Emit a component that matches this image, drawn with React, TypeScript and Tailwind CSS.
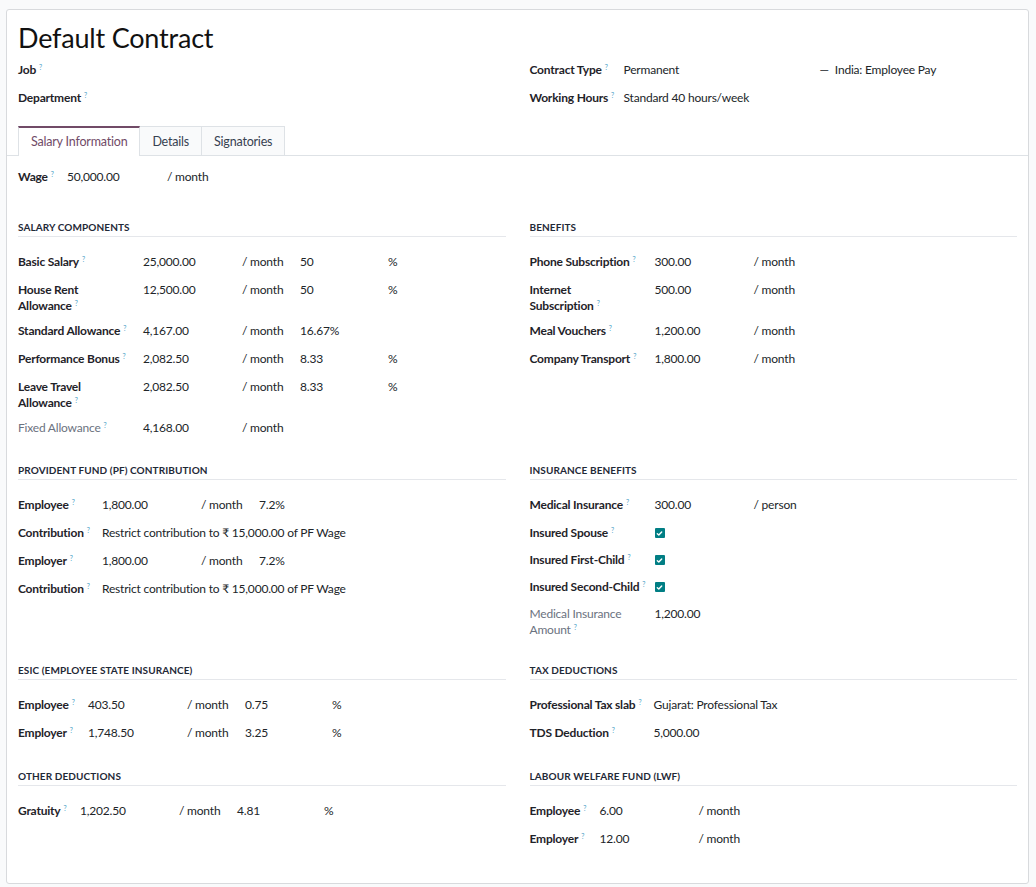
import React from "react";

type Row = {
  label: string[];
  muted?: boolean;
  cells: React.ReactNode[];
  h?: string;
};

type Section = {
  title: string;
  cols: string;
  rows: Row[];
};

function Help() {
  return <span className="ml-[3px] align-top text-[7px] leading-[10px] font-normal text-[#4fa3c7]">?</span>;
}

function Check() {
  return (
    <span className="mt-[3px] flex h-[10px] w-[10px] items-center justify-center rounded-[1px] bg-[#017e84]">
      <svg width="7" height="7" viewBox="0 0 8 8" fill="none" stroke="white" strokeWidth="1.6" strokeLinecap="round" strokeLinejoin="round">
        <path d="M1.5 4.2l1.7 1.6L6.5 2.2" />
      </svg>
    </span>
  );
}

function FieldRow({ row, cols }: { row: Row; cols: string }) {
  return (
    <div className={`grid ${cols} ${row.h ?? "h-[28px]"} items-start pt-[6px] leading-[16px]`}>
      <div className={`whitespace-nowrap ${row.muted ? "font-normal text-[#6b7280]" : "font-bold text-[#1f2329]"}`}>
        {row.label.map((l, i) => (
          <div key={i}>
            {l}
            {i === row.label.length - 1 && <Help />}
          </div>
        ))}
      </div>
      {row.cells.map((c, i) => (
        <div key={i} className="whitespace-nowrap text-[#212529]">
          {c}
        </div>
      ))}
    </div>
  );
}

function Block({ s, mb }: { s: Section; mb: string }) {
  return (
    <div className={mb}>
      <div className="mb-[11px] border-b border-[#e5e7eb] pb-[2px] text-[10px] leading-[14px] font-bold tracking-[0.01em] text-[#1f2937] uppercase">
        {s.title}
      </div>
      {s.rows.map((r, i) => (
        <FieldRow key={i} row={r} cols={s.cols} />
      ))}
    </div>
  );
}

const contribution = <span>Restrict contribution to ₹ 15,000.00 of PF Wage</span>;

const salary: Section = {
  title: "Salary Components",
  cols: "grid-cols-[125px_99px_58px_88px_1fr]",
  rows: [
    { label: ["Basic Salary"], cells: ["25,000.00", "/ month", "50", "%"] },
    { label: ["House Rent", "Allowance"], cells: ["12,500.00", "/ month", "50", "%"], h: "h-[41px]" },
    { label: ["Standard Allowance"], cells: ["4,167.00", "/ month", "16.67%", ""] },
    { label: ["Performance Bonus"], cells: ["2,082.50", "/ month", "8.33", "%"] },
    { label: ["Leave Travel", "Allowance"], cells: ["2,082.50", "/ month", "8.33", "%"], h: "h-[41px]" },
    { label: ["Fixed Allowance"], muted: true, cells: ["4,168.00", "/ month", "", ""] },
  ],
};

const benefits: Section = {
  title: "Benefits",
  cols: "grid-cols-[125px_99px_1fr]",
  rows: [
    { label: ["Phone Subscription"], cells: ["300.00", "/ month"] },
    { label: ["Internet", "Subscription"], cells: ["500.00", "/ month"], h: "h-[41px]" },
    { label: ["Meal Vouchers"], cells: ["1,200.00", "/ month"] },
    { label: ["Company Transport"], cells: ["1,800.00", "/ month"] },
  ],
};

const pf: Section = {
  title: "Provident Fund (PF) Contribution",
  cols: "grid-cols-[84px_99px_58px_1fr]",
  rows: [
    { label: ["Employee"], cells: ["1,800.00", "/ month", "7.2%"] },
    { label: ["Contribution"], cells: [contribution] },
    { label: ["Employer"], cells: ["1,800.00", "/ month", "7.2%"] },
    { label: ["Contribution"], cells: [contribution] },
  ],
};

const insurance: Section = {
  title: "Insurance Benefits",
  cols: "grid-cols-[125px_99px_1fr]",
  rows: [
    { label: ["Medical Insurance"], cells: ["300.00", "/ person"] },
    { label: ["Insured Spouse"], cells: [<Check />], h: "h-[27px]" },
    { label: ["Insured First-Child"], cells: [<Check />], h: "h-[27px]" },
    { label: ["Insured Second-Child"], cells: [<Check />], h: "h-[27px]" },
    { label: ["Medical Insurance", "Amount"], muted: true, cells: ["1,200.00"], h: "h-[41px]" },
  ],
};

const esic: Section = {
  title: "ESIC (Employee State Insurance)",
  cols: "grid-cols-[70px_99px_58px_87px_1fr]",
  rows: [
    { label: ["Employee"], cells: ["403.50", "/ month", "0.75", "%"] },
    { label: ["Employer"], cells: ["1,748.50", "/ month", "3.25", "%"] },
  ],
};

const tax: Section = {
  title: "Tax Deductions",
  cols: "grid-cols-[124px_1fr]",
  rows: [
    { label: ["Professional Tax slab"], cells: ["Gujarat: Professional Tax"] },
    { label: ["TDS Deduction"], cells: ["5,000.00"] },
  ],
};

const other: Section = {
  title: "Other Deductions",
  cols: "grid-cols-[62px_99px_58px_87px_1fr]",
  rows: [{ label: ["Gratuity"], cells: ["1,202.50", "/ month", "4.81", "%"] }],
};

const lwf: Section = {
  title: "Labour Welfare Fund (LWF)",
  cols: "grid-cols-[70px_99px_1fr]",
  rows: [
    { label: ["Employee"], cells: ["6.00", "/ month"] },
    { label: ["Employer"], cells: ["12.00", "/ month"] },
  ],
};

export default function App() {
  return (
    <div
      className="min-h-[887px] bg-[#f9fafb] pt-[9px] pl-[6px] text-[12px] tracking-[-0.2px] text-[#212529]"
      style={{ fontFamily: 'Lato, "Noto Sans", sans-serif' }}
    >
      <div className="h-[875px] w-[1023px] rounded-[3px] border border-[#d8dadd] bg-white px-[11px] pt-[14px]">
        <h1 className="text-[27px] leading-[28px] font-normal text-[#111]">Default Contract</h1>

        <div className="mt-[4px] grid grid-cols-2 gap-x-6">
          <div>
            <FieldRow row={{ label: ["Job"], cells: [] }} cols="grid-cols-[94px_1fr]" />
            <FieldRow row={{ label: ["Department"], cells: [] }} cols="grid-cols-[94px_1fr]" />
          </div>
          <div>
            <FieldRow
              row={{
                label: ["Contract Type"],
                cells: [
                  <div className="grid grid-cols-[196px_1fr]">
                    <span>Permanent</span>
                    <span>
                      <span className="mr-[6px]">—</span>India: Employee Pay
                    </span>
                  </div>,
                ],
              }}
              cols="grid-cols-[94px_1fr]"
            />
            <FieldRow row={{ label: ["Working Hours"], cells: ["Standard 40 hours/week"] }} cols="grid-cols-[94px_1fr]" />
          </div>
        </div>

        <div className="-mx-[11px] mt-[14px] flex border-b border-[#dee2e6] px-[11px]">
          <div className="-mb-px h-[30px] border-x border-t-2 border-[#dee2e6] border-t-[#714b67] bg-white px-3 pt-[5px] text-[12.5px] text-[#714b67]">
            Salary Information
          </div>
          <div className="h-[29px] border-t border-r border-[#dee2e6] bg-[#f9fafb] px-3 pt-[6px] text-[12.5px] text-[#374151]">Details</div>
          <div className="h-[29px] border-t border-r border-[#dee2e6] bg-[#f9fafb] px-3 pt-[6px] text-[12.5px] text-[#374151]">Signatories</div>
        </div>

        <div className="mt-[7px]">
          <FieldRow row={{ label: ["Wage"], cells: ["50,000.00", "/ month"] }} cols="grid-cols-[49px_100px_1fr]" />
        </div>

        <div className="mt-[29px] grid grid-cols-2 gap-x-6">
          <Block s={salary} mb="mb-[21px]" />
          <Block s={benefits} mb="mb-[21px]" />
          <Block s={pf} mb="mb-[22px]" />
          <Block s={insurance} mb="mb-[22px]" />
          <Block s={esic} mb="mb-[22px]" />
          <Block s={tax} mb="mb-[22px]" />
          <Block s={other} mb="" />
          <Block s={lwf} mb="" />
        </div>
      </div>
    </div>
  );
}
